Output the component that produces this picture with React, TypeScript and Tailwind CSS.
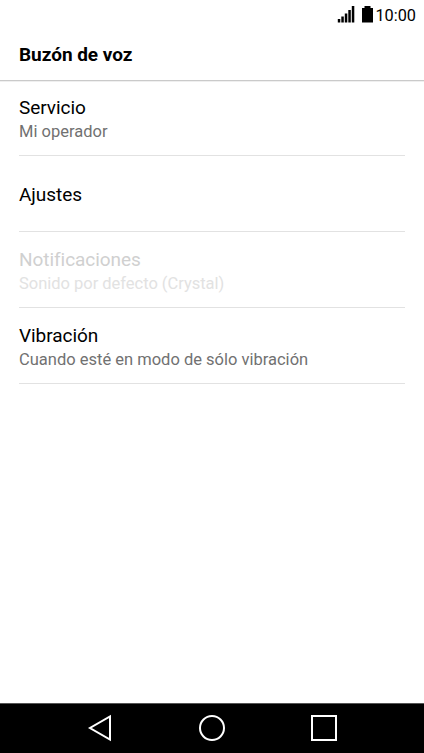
const rows = [
  { title: 'Servicio', detail: 'Mi operador' },
  { title: 'Ajustes' },
  { title: 'Notificaciones', detail: 'Sonido por defecto (Crystal)', disabled: true },
  { title: 'Vibración', detail: 'Cuando esté en modo de sólo vibración' },
];

function StatusBar() {
  return (
    <div className="flex h-[30px] items-center justify-end pr-2">
      <svg className="mr-[6.500px]" width="18" height="18" viewBox="0 0 18 18" fill="#000">
        <path d="M.8 13h2.500v3.500H.8zM4.300 10.500h2.500v6H4.300zM7.800 7.500h2.500v9H7.800zM11.300 4h2.500v12.500h-2.500zM14.800 0h2.500v16.500h-2.500z" />
      </svg>
      <svg className="mr-[2.500px]" width="11" height="18" viewBox="0 0 11 18" fill="#000">
        <path d="M2.500 0h6v2H11v14.500H0V2h2.500z" />
      </svg>
      <span className="pt-px text-[16.3px] leading-5">10:00</span>
    </div>
  );
}

export default function App() {
  return (
    <div className="flex h-[753px] w-[424px] flex-col bg-white font-[Roboto,sans-serif] text-black">
      <StatusBar />
      <header className="flex h-[51px] items-center border-b border-[#cacaca] px-[19px] shadow-[0_1px_0_#efefef]">
        <h1 className="text-[19px] font-bold leading-6 tracking-[-0.03px]">Buzón de voz</h1>
      </header>
      <main className="flex-1 px-[19px]">
        {rows.map((row) => (
          <div
            key={row.title}
            className={`flex h-[76px] flex-col justify-center border-b border-[#e2e2e2] first:h-[75px] ${row.detail ? 'pt-[4px]' : 'pt-[2px]'} ${row.disabled ? 'text-[#d0d0d0]' : ''}`}
          >
            <div className="text-[19px] leading-6 tracking-[-0.05px]">{row.title}</div>
            {row.detail && (
              <div className={`text-[16.500px] leading-6 ${row.disabled ? 'tracking-[-0.02px] text-[#e2e2e2]' : 'text-[#717171]'}`}>{row.detail}</div>
            )}
          </div>
        ))}
      </main>
      <nav className="flex h-[50px] items-center justify-between border-t border-[#555] bg-black px-[86px] pb-px">
        <svg width="28" height="28" viewBox="0 0 28 28" fill="none" stroke="#fff" strokeWidth="2">
          <path d="M24 2.500v23L4 14z" />
        </svg>
        <svg width="28" height="28" viewBox="0 0 28 28" fill="none" stroke="#fff" strokeWidth="2">
          <circle cx="14" cy="14" r="12" />
        </svg>
        <svg width="28" height="28" viewBox="0 0 28 28" fill="none" stroke="#fff" strokeWidth="2">
          <path d="M2 2h24v24H2z" />
        </svg>
      </nav>
    </div>
  );
}
